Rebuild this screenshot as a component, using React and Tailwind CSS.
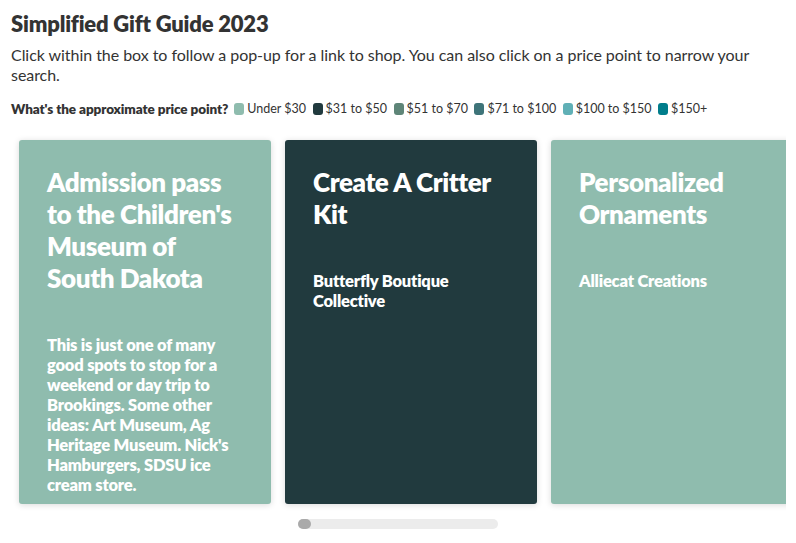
import React from "react";

const legend = [
  ["Under $30", "bg-[#8fbcae]"],
  ["$31 to $50", "bg-[#213a3e]"],
  ["$51 to $70", "bg-[#5e8578]"],
  ["$71 to $100", "bg-[#3e7479]"],
  ["$100 to $150", "bg-[#60b0b6]"],
  ["$150+", "bg-[#007d8b]"],
];

const cards = [
  {
    bg: "bg-[#8fbcae]",
    title: "Admission pass to the Children's Museum of South Dakota",
    sub: "This is just one of many good spots to stop for a weekend or day trip to Brookings. Some other ideas: Art Museum, Ag Heritage Museum. Nick's Hamburgers, SDSU ice cream store.",
  },
  {
    bg: "bg-[#213a3e]",
    title: "Create A Critter Kit",
    sub: "Butterfly Boutique Collective",
  },
  {
    bg: "bg-[#8fbcae]",
    title: "Personalized Ornaments",
    sub: "Alliecat Creations",
  },
];

export default function App() {
  return (
    <div className="w-[796px] h-[543px] bg-white overflow-hidden text-[#333] font-['Lato','Noto_Sans',sans-serif]">
      <div className="pl-[11px] pt-[9px]">
        <h1 className="text-[22px] font-extrabold leading-[30px] tracking-[-0.2px]">Simplified Gift Guide 2023</h1>
        <p className="mt-[6px] text-[16px] leading-[20px] pr-[40px] tracking-[-0.05px]">
          Click within the box to follow a pop-up for a link to shop. You can also click on a price point to narrow your search.
        </p>
        <div className="mt-[16px] flex items-center text-[12.5px] leading-[16px]">
          <span className="font-extrabold text-[13.5px] mr-[6px] tracking-[-0.1px]">What's the approximate price point?</span>
          {legend.map(([label, c]) => (
            <span key={label} className="flex items-center mr-[6.5px]">
              <span className={`inline-block w-[10px] h-[12px] rounded-[3px] mr-[3px] ${c}`}></span>
              <span>{label}</span>
            </span>
          ))}
        </div>
      </div>
      <div className="ml-[11px] w-[775px] overflow-hidden mt-[18px] pt-[5px] pb-[10px]">
        <div className="flex gap-[14px] pl-[8px]">
          {cards.map((c, i) => (
            <div
              key={i}
              className={`shrink-0 w-[252px] h-[364px] rounded-[3px] shadow-[0_1px_6px_rgba(0,0,0,0.15)] text-white px-[28px] pt-[26px] ${c.bg}`}
            >
              <div className="text-[26px] font-extrabold leading-[32px] tracking-[-0.4px]">{c.title}</div>
              <div className="mt-[41px] text-[16.5px] font-extrabold leading-[20px] tracking-[-0.2px]">{c.sub}</div>
            </div>
          ))}
        </div>
      </div>
      <div className="flex justify-center mt-[5px]">
        <div className="w-[200px] h-[10px] rounded-full bg-[#ececec] relative">
          <div className="absolute left-0 top-0 w-[13px] h-[10px] rounded-full bg-[#aaaaaa]"></div>
        </div>
      </div>
    </div>
  );
}
